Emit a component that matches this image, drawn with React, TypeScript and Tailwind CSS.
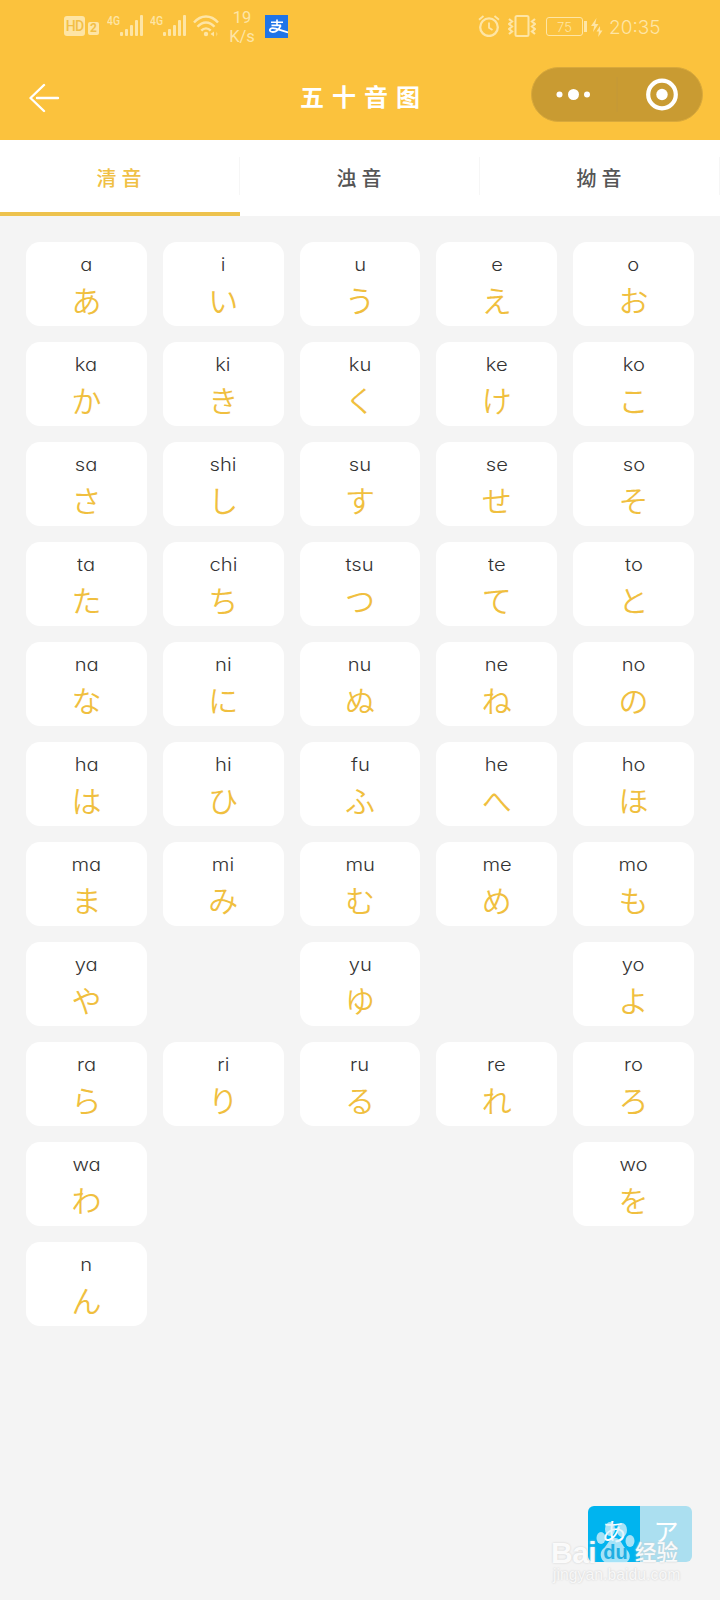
import clsx from "clsx";

const tabs = ["清音", "浊音", "拗音"];

const rows = [
  ["a あ", "i い", "u う", "e え", "o お"],
  ["ka か", "ki き", "ku く", "ke け", "ko こ"],
  ["sa さ", "shi し", "su す", "se せ", "so そ"],
  ["ta た", "chi ち", "tsu つ", "te て", "to と"],
  ["na な", "ni に", "nu ぬ", "ne ね", "no の"],
  ["ha は", "hi ひ", "fu ふ", "he へ", "ho ほ"],
  ["ma ま", "mi み", "mu む", "me め", "mo も"],
  ["ya や", "", "yu ゆ", "", "yo よ"],
  ["ra ら", "ri り", "ru る", "re れ", "ro ろ"],
  ["wa わ", "", "", "", "wo を"],
  ["n ん", "", "", "", ""],
];

function Signal() {
  return (
    <div className="flex">
      <span className="w-[13px] h-[11px] origin-left scale-x-[0.8] font-['Roboto',sans-serif] text-[13px] leading-[11px] font-medium">4G</span>
      <svg width="23" height="22" viewBox="0 0 23 22" fill="currentColor">
        <rect x="0" y="17" width="3" height="4" rx="1" />
        <rect x="5" y="14" width="3" height="7" rx="1" />
        <rect x="10" y="10" width="3" height="11" rx="1" />
        <rect x="15" y="5" width="3" height="16" rx="1" />
        <rect x="20" y="0" width="3" height="21" rx="1" />
      </svg>
    </div>
  );
}

function StatusBar() {
  return (
    <div className="flex justify-between h-[54px] pl-16 pr-[60px] pt-[15px] text-[#fee5a5]">
      <div className="flex items-start">
        <div className="mt-px w-[21px] h-5 rounded-[3px] bg-[#fee5a5] text-[#f3bf45] font-['Roboto',sans-serif] text-[14px] leading-5 font-medium text-center tracking-[-0.8px]">
          HD
        </div>
        <div className="ml-[3px] mt-[7px] w-[11px] h-[13px] rounded-[2px] bg-[#fee5a5] text-[#f3bf45] font-['Roboto',sans-serif] text-[12px] leading-[13px] font-bold text-center">
          2
        </div>
        <div className="ml-2 flex gap-[7px]">
          <Signal />
          <Signal />
        </div>
        <svg className="ml-[7px]" width="26" height="22" viewBox="0 0 26 22" fill="none" stroke="currentColor" strokeWidth="2.4">
          <path d="M1 7.5C8 -0.5 18 -0.5 25 7.5" />
          <path d="M4.5 11.8C9.5 6 16.5 6 21.5 11.8" />
          <path d="M8.3 15.6C11 12.6 15 12.6 17.7 15.6" />
          <circle cx="13" cy="19" r="2.2" fill="currentColor" stroke="none" />
          <path d="M21 16.5v5l-3.5-2.5z" fill="currentColor" stroke="none" />
          <path d="M23 16.5l1.8 2.5-1.8 2.5z" fill="currentColor" stroke="none" opacity=".5" />
        </svg>
        <div className="ml-[9px] -mt-[7px] w-[28px] text-center font-['Roboto',sans-serif] text-[16.5px] leading-[19px]">
          <div>19</div>
          <div>K/s</div>
        </div>
        <svg className="ml-[9px]" width="23" height="23" viewBox="0 0 23 23" fill="none" stroke="#fff" strokeWidth="1.8">
          <rect width="23" height="23" fill="#1f74e8" stroke="none" />
          <path d="M6 7.2h12M12 4.5v5.8M6.5 10.4h9.5" strokeWidth="1.6" />
          <path d="M15.8 10.4c-1.8 4-4.8 6.6-8 6.6-4.2 0-3.8-4 0-3.8 4 .2 8.5 2.6 15.2 4.3" />
        </svg>
      </div>
      <div className="flex items-start">
        <svg width="22" height="22" viewBox="0 0 22 22" fill="none" stroke="currentColor" strokeWidth="2.3">
          <circle cx="11" cy="12.2" r="8.8" />
          <path d="M11 7.5v5.2l3.5 2.3" strokeWidth="1.8" />
          <path d="M1 4.8L5.5 1M21 4.8L16.5 1" strokeWidth="1.8" />
        </svg>
        <svg className="ml-2" width="28" height="22" viewBox="0 0 28 22" fill="none" stroke="currentColor" strokeWidth="2">
          <rect x="7.5" y="1" width="13" height="20" rx="1.5" />
          <path d="M1 4l3 2.5-3 2.5 3 2.5-3 2.5 3 2.5-3 2.5M27 4l-3 2.5 3 2.5-3 2.5 3 2.5-3 2.5 3 2.5" strokeWidth="2.2" />
        </svg>
        <div className="ml-[10px] mt-[2px] w-[37px] h-[19px] rounded-[3px] border border-[#fee5a5] font-['Inter',sans-serif] text-[13px] leading-[18px] font-light text-center">
          75
        </div>
        <svg className="ml-px mt-[3px]" width="19" height="19" viewBox="0 0 19 19" fill="currentColor">
          <rect x="0" y="3" width="3" height="11" />
          <path d="M12.5 0L7 8h3.2l-1.2 6L14.5 6h-3.3z" />
          <path d="M16 8l-3.5 5.5h2.4l-.7 5.5L18.5 12.5h-2.4z" />
        </svg>
        <span className="ml-[6px] mt-[2px] w-[51px] whitespace-nowrap font-['Inter',sans-serif] text-[19px] leading-[21px] font-light">20:35</span>
      </div>
    </div>
  );
}

function NavBar() {
  return (
    <div className="grid grid-cols-[1fr_auto_1fr] items-start h-[86px] pl-[29px] pr-[17px] text-white">
      <svg className="mt-[29px]" width="31" height="30" viewBox="0 0 31 30" fill="none" stroke="currentColor" strokeWidth="2.4" strokeLinecap="round" strokeLinejoin="round">
        <path d="M15 2L1.5 15 15 28M8 15h21" />
      </svg>
      <h1 className="mt-[26px] pr-[4px] text-[24px] leading-8 font-bold tracking-[8px]">五十音图</h1>
      <div className="justify-self-end mt-[13px] w-[172px] h-[55px] rounded-full border border-[#d9a93c] bg-[#c99b32] flex items-center">
        <svg width="170" height="53" viewBox="0 0 170 53" fill="currentColor">
          <circle cx="27.5" cy="26.5" r="3" />
          <circle cx="41.5" cy="26.5" r="5.5" />
          <circle cx="55" cy="26.5" r="3" />
          <path d="M85 9v35" stroke="#c39838" />
          <circle cx="130" cy="26.5" r="13.8" fill="none" stroke="currentColor" strokeWidth="4.2" />
          <circle cx="130" cy="26.5" r="5.7" />
        </svg>
      </div>
    </div>
  );
}

function Tabs() {
  return (
    <div className="grid grid-cols-3 h-[76px] bg-white">
      {tabs.map((tab, i) => (
        <div
          key={tab}
          className={clsx(
            "flex flex-col justify-between pt-[17px] text-[20px] tracking-[5px] font-medium",
            i === 0 ? "text-[#f0c044]" : "text-[#555555]"
          )}
        >
          <div className="h-[38px] border-r border-[#f6f6f6] pl-1 text-center leading-[42px]">{tab}</div>
          {i === 0 && <div className="h-1 bg-[#edc24d]" />}
        </div>
      ))}
    </div>
  );
}

function KanaCard({ item }: { item: string }) {
  if (!item) return <div />;
  const [romaji, kana] = item.split(" ");

  return (
    <div className="flex flex-col items-center rounded-[14px] bg-white pt-[12px]">
      <span className="scale-x-[1.12] font-['Inter',sans-serif] text-[18px] leading-[22px] font-light text-[#333333] [font-feature-settings:'cv11']">{romaji}</span>
      <span className="mt-[5px] text-[30px] leading-9 font-[350] text-[#f0bf3f]">{kana}</span>
    </div>
  );
}

function Watermark() {
  return (
    <div className="absolute left-[551px] top-[1524px] w-[140px] text-white/90">
      <div className="relative flex h-[42px] items-end font-['Liberation_Sans','Noto_Sans_CJK_SC',sans-serif] font-bold leading-[26px] [text-shadow:0_0_2px_#c8c8c8]">
        <span className="w-[48px] text-[30px] tracking-[-0.5px]">Bai</span>
        <svg className="absolute left-[44px] -top-[4px]" width="40" height="44" viewBox="0 0 40 44" fill="#def3fb" opacity=".75">
          <ellipse cx="15" cy="9" rx="5" ry="7" />
          <ellipse cx="27" cy="10" rx="5" ry="7" />
          <ellipse cx="6" cy="18" rx="4.5" ry="6" />
          <ellipse cx="35" cy="21" rx="4.5" ry="6" />
          <path d="M20 18c-6 0-7 7-12 11-5 5-1 14 5 14h15c7 0 9-8 4-13-5-4-6-12-12-12z" />
        </svg>
        <span className="relative w-[33px] text-center text-[20px] leading-[27px] text-[#20aee2] [text-shadow:none]">du</span>
        <span className="ml-[3px] text-[21.5px] leading-[25px] font-medium whitespace-nowrap">经验</span>
      </div>
      <div className="pl-[2px] font-['Liberation_Sans',sans-serif] text-[15.8px] leading-[18px] text-[#f8f8f8] whitespace-nowrap [text-shadow:0_0_2px_#c8c8c8]">
        jingyan.baidu.com
      </div>
    </div>
  );
}

export default function App() {
  return (
    <div className="relative w-[720px] h-[1600px] overflow-hidden bg-[#f4f4f4] font-['Noto_Sans_CJK_SC',sans-serif]">
      <header className="bg-[#fbc23d]">
        <StatusBar />
        <NavBar />
      </header>
      <Tabs />
      <main lang="ja" className="grid grid-cols-5 auto-rows-[84px] gap-4 px-[26px] pt-[26px] font-['Noto_Sans_CJK_JP',sans-serif]">
        {rows.flat().map((item, i) => (
          <KanaCard key={i} item={item} />
        ))}
      </main>

      {/* hiragana / katakana switch */}
      <div lang="ja" className="absolute left-[588px] top-[1506px] flex w-[104px] h-[56px] overflow-hidden rounded-[6px] font-['Noto_Sans_CJK_JP',sans-serif] text-[25px] leading-[48px] font-normal text-white text-center">
        <div className="w-1/2 bg-[#00b4ef]">あ</div>
        <div className="w-1/2 bg-[#abdff0]">ア</div>
      </div>
      <Watermark />
    </div>
  );
}
